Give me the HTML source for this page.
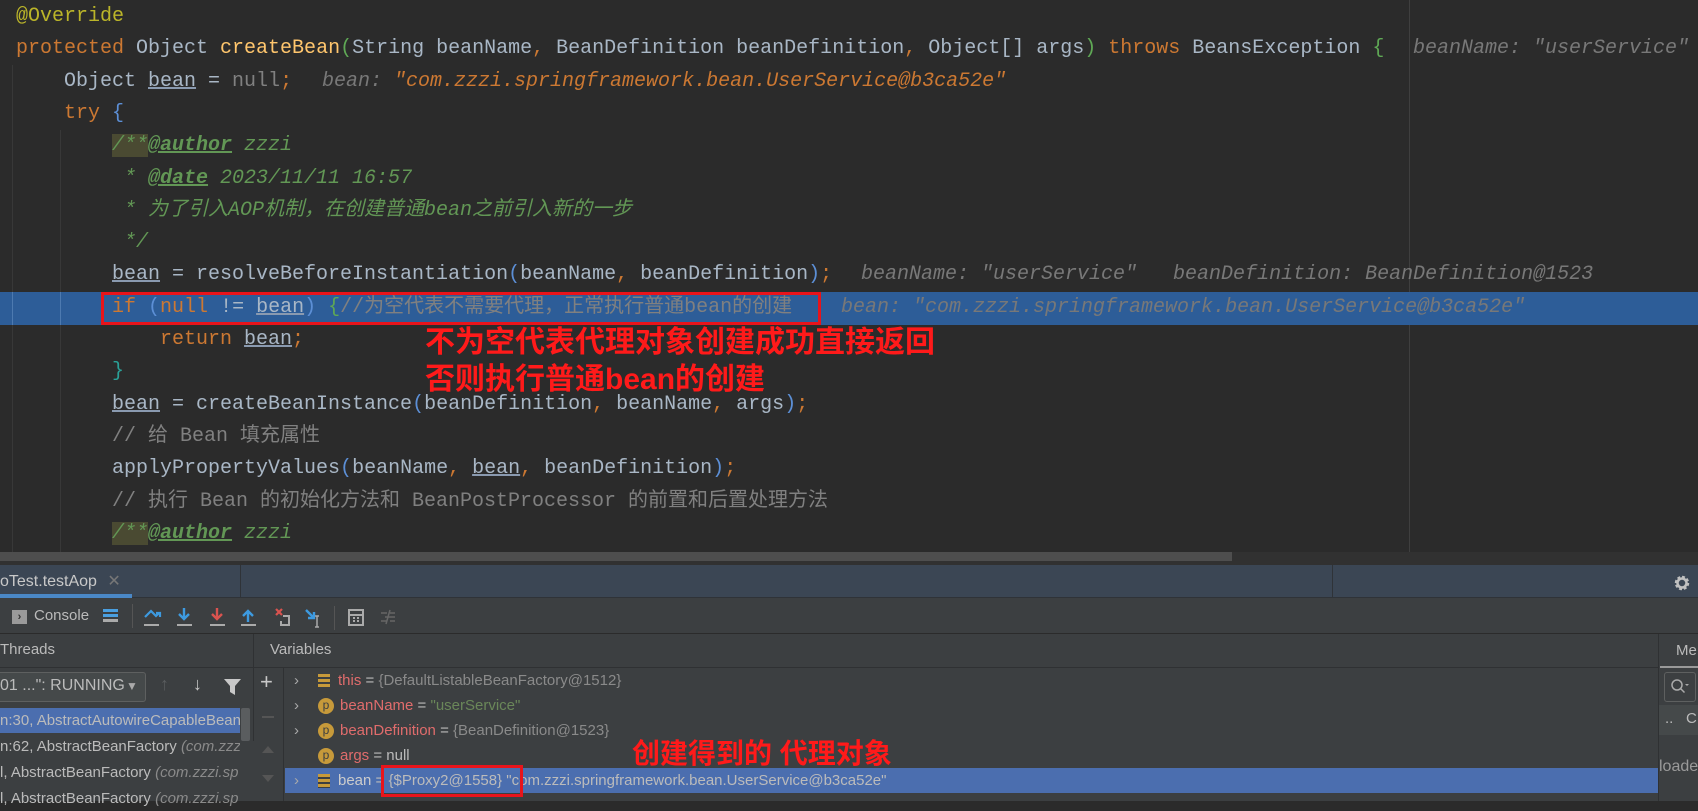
<!DOCTYPE html>
<html><head><meta charset="utf-8"><style>
*{margin:0;padding:0;box-sizing:border-box}
body{width:1698px;height:801px;overflow:hidden;background:#2b2b2b;position:relative;font-family:"Liberation Sans","Noto Sans CJK SC",sans-serif}
.ln{position:absolute;left:0;height:32px;line-height:32px;white-space:pre;font-family:"Liberation Mono","Noto Sans CJK SC",monospace;font-size:20px;color:#a9b7c6}
.k{color:#cc7832}.m{color:#ffc66d}.an{color:#bbb529}.dc{color:#629755;font-style:italic}.dt{color:#629755;font-style:italic;font-weight:bold;text-decoration:underline}
.cm{color:#808080}.u{text-decoration:underline;text-decoration-color:#8a9ab0}.g{color:#808080}.br{color:#5c8fd6}.gb{color:#5fa855}
.ih{position:absolute;font-family:"Liberation Mono",monospace;font-style:italic;font-size:20px;color:#787878;white-space:pre;height:32px;line-height:32px}
.ih .s{color:#cc7832}
.red{position:absolute;color:#ff1a1a;font-weight:bold;font-family:"Liberation Sans","Noto Sans CJK SC",sans-serif;white-space:nowrap}
.box{position:absolute;border:3px solid #e8141b}
.p{position:absolute;font-size:15px;color:#bbbbbb;white-space:nowrap}
.row{position:absolute;height:25px;line-height:25px;font-size:15px;white-space:nowrap;color:#bbbbbb}
.vn{color:#e06c6c}.vs{color:#6a8759}.vg{color:#8a8a8a}
.pi{display:inline-block;width:16px;height:16px;border-radius:8px;background:#c79a3a;color:#3c3f41;font-size:12px;line-height:15px;text-align:center;vertical-align:middle;margin-right:6px}
.fi{display:inline-block;width:12px;height:14px;vertical-align:middle;margin-right:8px;background:repeating-linear-gradient(#c79a3a 0 3px,#3c3f41 3px 5px)}
.ar{display:inline-block;width:14px;color:#aaa;margin-right:10px;font-size:15px}
</style></head><body>
<div style="position:absolute;left:12px;top:65px;width:1px;height:490px;background:#383838"></div>
<div style="position:absolute;left:60px;top:130px;width:1px;height:425px;background:#383838"></div>
<div style="position:absolute;left:1409px;top:0;width:1px;height:565px;background:#3f3f3f"></div>
<div style="position:absolute;left:0;top:292px;width:1698px;height:33px;background:#2d5d98"></div>
<div style="position:absolute;left:12px;top:292px;width:1px;height:33px;background:#4d7ab0"></div>
<div style="position:absolute;left:60px;top:292px;width:1px;height:33px;background:#4d7ab0"></div>

<div class="ln" style="top:1px;left:16px"><span class="an">@Override</span></div>
<div class="ln" style="top:33px;left:16px"><span class="k">protected</span> Object <span class="m">createBean</span><span class="gb">(</span>String beanName<span class="k">,</span> BeanDefinition beanDefinition<span class="k">,</span> Object[] args<span class="gb">)</span> <span class="k">throws</span> BeansException <span class="gb">{</span></div>
<div class="ih" style="top:33px;left:1413px">beanName: "userService"</div>
<div class="ln" style="top:66px;left:64px">Object <span class="u">bean</span> = <span class="g">null</span><span class="k">;</span></div>
<div class="ih" style="top:66px;left:322px">bean: <span class="s">"com.zzzi.springframework.bean.UserService@b3ca52e"</span></div>
<div class="ln" style="top:98px;left:64px"><span class="k">try</span> <span class="br">{</span></div>
<div class="ln" style="top:130px;left:112px"><span class="dc" style="background:#4a4a32">/**</span><span class="dt">@author</span><span class="dc"> zzzi</span></div>
<div class="ln" style="top:163px;left:112px"><span class="dc"> * </span><span class="dt">@date</span><span class="dc"> 2023/11/11 16:57</span></div>
<div class="ln" style="top:195px;left:112px"><span class="dc"> * 为了引入AOP机制，在创建普通bean之前引入新的一步</span></div>
<div class="ln" style="top:227px;left:112px"><span class="dc"> */</span></div>
<div class="ln" style="top:259px;left:112px"><span class="u">bean</span> = resolveBeforeInstantiation<span class="br">(</span>beanName<span class="k">,</span> beanDefinition<span class="br">)</span><span class="k">;</span></div>
<div class="ih" style="top:259px;left:861px">beanName: "userService"   beanDefinition: BeanDefinition@1523</div>
<div class="ln" style="top:292px;left:112px"><span class="k">if</span> <span class="br">(</span><span class="k">null</span> != <span class="u">bean</span><span class="br">)</span> <span class="gb">{</span><span class="cm">//为空代表不需要代理，正常执行普通bean的创建</span></div>
<div class="ih" style="top:292px;left:841px">bean: "com.zzzi.springframework.bean.UserService@b3ca52e"</div>
<div class="ln" style="top:324px;left:160px"><span class="k">return</span> <span class="u">bean</span><span class="k">;</span></div>
<div class="ln" style="top:356px;left:112px"><span class="gb" style="color:#2aa198">}</span></div>
<div class="ln" style="top:389px;left:112px"><span class="u">bean</span> = createBeanInstance<span class="br">(</span>beanDefinition<span class="k">,</span> beanName<span class="k">,</span> args<span class="br">)</span><span class="k">;</span></div>
<div class="ln" style="top:421px;left:112px"><span class="cm">// 给 Bean 填充属性</span></div>
<div class="ln" style="top:453px;left:112px">applyPropertyValues<span class="br">(</span>beanName<span class="k">,</span> <span class="u">bean</span><span class="k">,</span> beanDefinition<span class="br">)</span><span class="k">;</span></div>
<div class="ln" style="top:486px;left:112px"><span class="cm">// 执行 Bean 的初始化方法和 BeanPostProcessor 的前置和后置处理方法</span></div>
<div class="ln" style="top:518px;left:112px"><span class="dc" style="background:#4a4a32">/**</span><span class="dt">@author</span><span class="dc"> zzzi</span></div>
<div class="ln" style="top:550px;left:112px"><span class="dc"> * @date 2023/11/2 16:23</span></div>

<div class="box" style="left:101px;top:292px;width:720px;height:33px"></div>
<div class="red" style="left:425px;top:326px;font-size:30px;line-height:34px">不为空代表代理对象创建成功直接返回</div>
<div class="red" style="left:425px;top:363px;font-size:30px;line-height:34px">否则执行普通bean的创建</div>

<div style="position:absolute;left:0;top:552px;width:1698px;height:13px;background:#313131"></div>
<div style="position:absolute;left:0;top:552px;width:1232px;height:9px;background:#4e4e4e"></div>

<div style="position:absolute;left:0;top:565px;width:1698px;height:33px;background:#3b4654;border-bottom:1px solid #2f3338"></div>
<div class="p" style="left:0;top:571px;font-size:16px;color:#c8c8c8">oTest.testAop <span style="color:#777;margin-left:6px">✕</span></div>
<div style="position:absolute;left:0;top:594px;width:132px;height:4px;background:#4a88c7"></div>
<div style="position:absolute;left:240px;top:565px;width:1px;height:33px;background:#2f3338"></div>
<div style="position:absolute;left:1332px;top:565px;width:1px;height:33px;background:#2f3338"></div>
<svg style="position:absolute;left:1673px;top:574px" width="18" height="18" viewBox="0 0 18 18"><circle cx="9" cy="9" r="5.5" fill="none" stroke="#c0c0c0" stroke-width="3.5" stroke-dasharray="2.6 1.7"/><circle cx="9" cy="9" r="4.5" fill="none" stroke="#c0c0c0" stroke-width="2.5"/></svg>

<div style="position:absolute;left:0;top:598px;width:1698px;height:36px;background:#3c3f41;border-bottom:1px solid #2b2b2b"></div>
<div style="position:absolute;left:12px;top:610px;width:15px;height:14px;background:#9a9a9a;color:#333;font-size:11px;line-height:14px;text-align:center;font-weight:bold">›</div>
<div class="p" style="left:34px;top:607px;font-size:15px">Console</div>
<div style="position:absolute;left:103px;top:609px;width:15px;height:3px;background:#4a9fe0;box-shadow:0 5px 0 #4a9fe0,0 10px 0 #aaa"></div>
<div style="position:absolute;left:132px;top:604px;width:1px;height:24px;background:#555"></div>
<svg style="position:absolute;left:142px;top:606px" width="260" height="24" viewBox="0 0 260 24">
<path d="M3 11 L9 5 L14 10 L17 7 M14 7h4v4" stroke="#3d9ae0" stroke-width="2.2" fill="none"/><rect x="2" y="18" width="15" height="2" fill="#aaa"/>
<path d="M42 2v11 M37 8l5 5 5-5" stroke="#3d9ae0" stroke-width="2.4" fill="none"/><rect x="35" y="18" width="15" height="2" fill="#aaa"/>
<path d="M75 2v11 M70 8l5 5 5-5" stroke="#d9534f" stroke-width="2.4" fill="none"/><rect x="68" y="18" width="15" height="2" fill="#aaa"/>
<path d="M106 16V5 M101 10l5-5 5 5" stroke="#3d9ae0" stroke-width="2.4" fill="none"/><rect x="99" y="18" width="15" height="2" fill="#aaa"/>
<path d="M134 3l6 6 M140 3l-6 6" stroke="#d9534f" stroke-width="2.2"/><path d="M141 10h6v9h-8v-4" stroke="#aaa" stroke-width="2" fill="none"/>
<path d="M164 4l8 8 M172 6v6h-6" stroke="#3d9ae0" stroke-width="2.4" fill="none"/><path d="M175 10v11 M173 10h4 M173 21h4" stroke="#aaa" stroke-width="1.5"/>
<rect x="192" y="0" width="1" height="24" fill="#555"/>
<rect x="207" y="4" width="14" height="15" fill="none" stroke="#aaa" stroke-width="2"/><path d="M207 9h14 M211 12h2 M215 12h2 M211 15h2 M215 15h2" stroke="#aaa" stroke-width="2"/>
<path d="M239 7h6 M239 15h6 M248 7h5 M248 15h5 M243 11h10 M248 4l-4 14" stroke="#666" stroke-width="1.5"/>
</svg>

<div style="position:absolute;left:0;top:634px;width:1698px;height:167px;background:#3c3f41"></div>
<div style="position:absolute;left:0;top:667px;width:1658px;height:1px;background:#2f3133"></div>
<div style="position:absolute;left:253px;top:634px;width:1px;height:167px;background:#2f3133"></div>
<div class="p" style="left:0;top:641px;font-size:15px">Threads</div>
<div class="p" style="left:270px;top:641px;font-size:15px">Variables</div>
<div style="position:absolute;left:-4px;top:672px;width:130px;height:30px;border:1px solid #5e6060;border-radius:3px;background:#45494a;width:150px"></div>
<div class="p" style="left:0;top:677px;font-size:16px">01 ...": RUNNING</div>
<div class="p" style="left:126px;top:679px;color:#aaa;font-size:12px">▼</div>
<div class="p" style="left:160px;top:674px;color:#5a5d5f;font-size:18px">↑</div>
<div class="p" style="left:193px;top:674px;color:#c8c8c8;font-size:18px">↓</div>
<svg style="position:absolute;left:224px;top:678px" width="17" height="17"><path d="M0 1h17l-6 7v9l-5-3V8z" fill="#c8c8c8"/></svg>
<div style="position:absolute;left:0;top:708px;width:240px;height:25px;background:#4b6eaf"></div>
<div style="position:absolute;left:241px;top:708px;width:9px;height:33px;background:#5a5d5f;border-radius:2px"></div>
<div class="row" style="left:0;top:708px">n:30, AbstractAutowireCapableBean</div>
<div class="row" style="left:0;top:734px">n:62, AbstractBeanFactory <i class="vg">(com.zzz</i></div>
<div class="row" style="left:0;top:760px">l, AbstractBeanFactory <i class="vg">(com.zzzi.sp</i></div>
<div class="row" style="left:0;top:786px">l, AbstractBeanFactory <i class="vg">(com.zzzi.sp</i></div>
<div style="position:absolute;left:240px;top:741px;width:14px;height:60px;background:#3c3f41"></div>
<div style="position:absolute;left:254px;top:668px;width:30px;height:133px;background:#3c3f41;border-right:1px solid #2f3133"></div>
<div class="p" style="left:260px;top:669px;font-size:22px;color:#c8c8c8">+</div>
<div style="position:absolute;left:262px;top:716px;width:12px;height:2px;background:#555"></div>
<div style="position:absolute;left:262px;top:746px;border:6px solid transparent;border-bottom:7px solid #555;border-top:0"></div>
<div style="position:absolute;left:262px;top:775px;border:6px solid transparent;border-top:7px solid #555;border-bottom:0"></div>
<div style="position:absolute;left:285px;top:768px;width:1373px;height:25px;background:#4b6eaf"></div>
<div class="row" style="left:294px;top:668px"><span class="ar">›</span><span class="fi"></span><span class="vn">this</span> = <span class="vg">{DefaultListableBeanFactory@1512}</span></div>
<div class="row" style="left:294px;top:693px"><span class="ar">›</span><span class="pi">p</span><span class="vn">beanName</span> = <span class="vs">"userService"</span></div>
<div class="row" style="left:294px;top:718px"><span class="ar">›</span><span class="pi">p</span><span class="vn">beanDefinition</span> = <span class="vg">{BeanDefinition@1523}</span></div>
<div class="row" style="left:294px;top:743px"><span class="ar"></span><span class="pi">p</span><span class="vn">args</span> = null</div>
<div class="row" style="left:294px;top:768px"><span class="ar">›</span><span class="fi"></span><span style="color:#ccc">bean</span> = {$Proxy2@1558} "com.zzzi.springframework.bean.UserService@b3ca52e"</div>
<div class="box" style="left:381px;top:765px;width:142px;height:32px"></div>
<div class="red" style="left:632px;top:738px;font-size:28px;line-height:32px">创建得到的 代理对象</div>

<div style="position:absolute;left:1658px;top:634px;width:40px;height:167px;background:#3c3f41;border-left:1px solid #2f3133"></div>
<div class="p" style="left:1676px;top:642px;font-size:15px">Me</div>
<div style="position:absolute;left:1660px;top:666px;width:38px;height:2px;background:#999"></div>
<div style="position:absolute;left:1664px;top:672px;width:32px;height:30px;border:1px solid #5e6060;border-radius:3px"></div>
<svg style="position:absolute;left:1670px;top:678px" width="20" height="18"><circle cx="7" cy="7" r="5" fill="none" stroke="#aaa" stroke-width="1.5"/><path d="M10.5 10.5l4 4" stroke="#aaa" stroke-width="1.5"/><path d="M15 6h4l-2 2z" fill="#aaa"/></svg>
<div style="position:absolute;left:1659px;top:705px;width:39px;height:30px;background:#45494a"></div>
<div class="p" style="left:1665px;top:710px">..</div>
<div class="p" style="left:1686px;top:710px">C</div>
<div class="p" style="left:1659px;top:758px;font-size:16px;color:#9a9a9a">loade</div>
</body></html>
